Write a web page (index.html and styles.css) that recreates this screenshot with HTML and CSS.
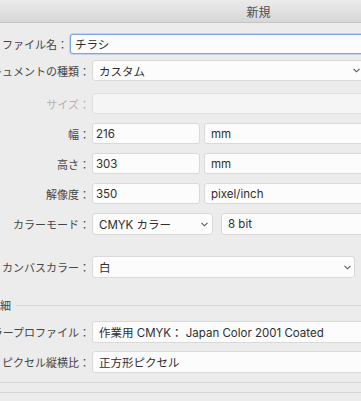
FILE: index.html
```html
<!DOCTYPE html>
<html lang="ja">
<head>
    <meta charset="UTF-8">
    <meta name="viewport" content="width=device-width, initial-scale=1.0">
    <title>新規</title>
    <link rel="stylesheet" href="styles.css">
</head>
<body>
    <div class="titlebar"><span class="title">新規</span></div>
    <div class="form">
        <div class="row row-name">
            <label class="label label-name"><span>ファイル名：</span></label>
            <input class="field field-focus" type="text" value="チラシ">
        </div>
        <div class="row row-type">
            <label class="label"><span>ドキュメントの種類：</span></label>
            <div class="select select-fill">
                <span>カスタム</span>
                <svg class="chevron" width="7" height="5" viewBox="0 0 7 5"><polyline points="0.5,0.8 3.5,3.8 6.5,0.8" /></svg>
            </div>
        </div>

        <div class="group">
            <div class="row">
                <label class="label label-disabled"><span>サイズ：</span></label>
                <div class="field field-disabled field-fill"></div>
            </div>
            <div class="row">
                <label class="label"><span>幅：</span></label>
                <input class="field field-num" type="text" value="216">
                <div class="select select-fill select-unit"><span>mm</span></div>
            </div>
            <div class="row">
                <label class="label"><span>高さ：</span></label>
                <input class="field field-num" type="text" value="303">
                <div class="select select-fill select-unit"><span>mm</span></div>
            </div>
            <div class="row">
                <label class="label"><span>解像度：</span></label>
                <input class="field field-num" type="text" value="350">
                <div class="select select-fill select-unit"><span>pixel/inch</span></div>
            </div>
            <div class="row row-tall">
                <label class="label"><span>カラーモード：</span></label>
                <div class="select select-mode">
                    <span>CMYK カラー</span>
                    <svg class="chevron" width="7" height="5" viewBox="0 0 7 5"><polyline points="0.5,0.8 3.5,3.8 6.5,0.8" /></svg>
                </div>
                <div class="select select-fill select-bit"><span>8 bit</span></div>
            </div>
        </div>

        <div class="row row-tall row-canvas">
            <label class="label"><span>カンバスカラー：</span></label>
            <div class="select select-canvas">
                <span>白</span>
                <svg class="chevron" width="7" height="5" viewBox="0 0 7 5"><polyline points="0.5,0.8 3.5,3.8 6.5,0.8" /></svg>
            </div>
        </div>

        <div class="section">
            <div class="section-title"><span>詳細</span></div>
            <div class="section-line"></div>
        </div>

        <div class="group group-detail">
            <div class="row row-tall">
                <label class="label"><span>カラープロファイル：</span></label>
                <div class="select select-fill"><span>作業用 CMYK： Japan Color 2001 Coated</span></div>
            </div>
            <div class="row row-tall">
                <label class="label"><span>ピクセル縦横比：</span></label>
                <div class="select select-fill"><span>正方形ピクセル</span></div>
            </div>
        </div>

        <div class="footer-line"></div>
        <div class="footer-line footer-line-last"></div>
    </div>
</body>
</html>
```

FILE: styles.css
```css
body {
    margin: 0;
    width: 361px;
    height: 401px;
    overflow: hidden;
    background-color: #ececec;
    font-family: Inter, "Noto Sans CJK JP", sans-serif;
    color: #2e2e2e;
}

.titlebar {
    height: 22px;
    padding-left: 156px;
    display: flex;
    align-items: center;
    justify-content: center;
    background: linear-gradient(#ebebeb, #d7d7d7);
    border-bottom: 1px solid #c4c4c4;
    font-size: 12px;
    color: #4d4d4d;
}

.form {
    width: 364px;
    padding-top: 11px;
}

.row {
    display: flex;
    align-items: center;
    height: 21px;
}

.row-name {
    height: 20px;
}

.row-type {
    margin-top: 6px;
}

.row-tall {
    height: 22px;
}

.row-canvas {
    margin-top: 21px;
}

/* labels wider than the column run off the left edge, like the cropped dialog */
.label {
    flex: 0 0 90px;
    min-width: 0;
    margin-right: 2px;
    display: flex;
    justify-content: flex-end;
    white-space: nowrap;
    font-size: 11px;
    color: #454545;
}

.label span,
.section-title span {
    flex-shrink: 0;
}

.label-name {
    flex-basis: 68px;
}

.label-disabled {
    color: #b2b2b2;
}

.field,
.select {
    box-sizing: border-box;
    height: 100%;
    border: 1px solid #d9d9d9;
    border-radius: 3px;
    background-color: #fcfcfc;
    font-family: inherit;
    font-size: 11.5px;
    color: #2e2e2e;
}

.field {
    min-width: 0;
    padding: 0 3px;
    outline: none;
}

.field-focus {
    flex: 1;
    padding-left: 4px;
    border-color: #7aa7e4;
    box-shadow: 0 0 0 1px rgba(122, 167, 228, 0.35);
}

.field-disabled {
    background-color: #f5f5f5;
    border-color: #e0e0e0;
}

.field-fill {
    flex: 1;
}

.field-num {
    width: 108px;
}

.select {
    display: flex;
    align-items: center;
    justify-content: space-between;
    padding: 0 3px 0 6px;
    white-space: nowrap;
    overflow: hidden;
}

.select-fill {
    flex: 1;
    min-width: 0;
}

.select-unit {
    margin-left: 4px;
}

.select-mode {
    width: 121px;
    padding-right: 4px;
}

.select-bit {
    margin-left: 8px;
}

.select-canvas {
    width: 263px;
}

.chevron {
    flex-shrink: 0;
}

.chevron polyline {
    fill: none;
    stroke: #555;
    stroke-width: 1.1;
}

.group {
    margin-top: 12px;
    display: flex;
    flex-direction: column;
    gap: 9px;
}

.group-detail {
    margin-top: 9px;
    gap: 8px;
}

.section {
    margin-top: 20px;
    height: 14px;
    display: flex;
    align-items: center;
    gap: 5px;
}

.section-title {
    flex: 0 0 11px;
    min-width: 0;
    display: flex;
    justify-content: flex-end;
    white-space: nowrap;
    font-size: 11px;
    color: #454545;
}

.section-line {
    flex: 1;
    height: 1px;
    background-color: #d6d6d6;
}

.footer-line {
    margin-top: 9px;
    height: 1px;
    background-color: #d6d6d6;
}
```
